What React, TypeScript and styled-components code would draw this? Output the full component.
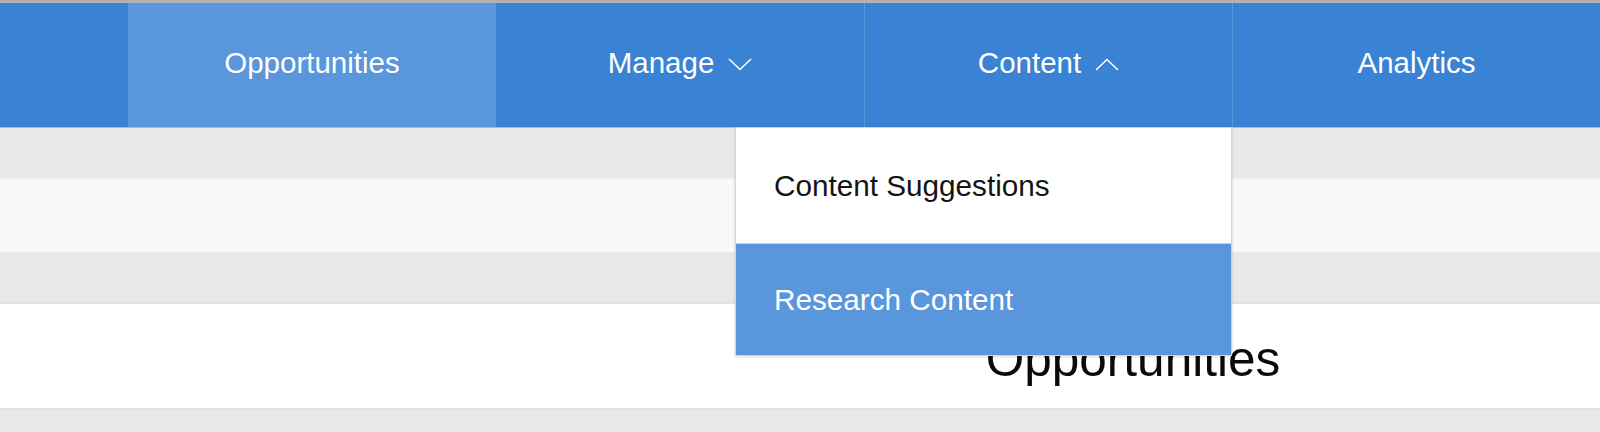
import React from 'react'
import styled, { createGlobalStyle } from 'styled-components'

const GlobalStyle = createGlobalStyle`
  html, body {
    margin: 0;
    padding: 0;
    background: #e8e8e8;
    font-family: "Liberation Sans", Arial, Helvetica, sans-serif;
  }
`;

const Page = styled.div`
  width: 1600px;
  height: 432px;
  overflow: hidden;
  background: #e8e8e8;
`;

const TopLine = styled.div`
  height: 3px;
  background: #b2b2b2;
`;

const NavBar = styled.nav`
  display: grid;
  grid-template-columns: 128px repeat(4, 1fr);
  height: 125px;
  background: #3a82d4;
  border-bottom: 1px solid #9fbfe6;
  box-sizing: border-box;
`;

const NavItem = styled.div<{ $active?: boolean; $divider?: boolean }>`
  position: relative;
  display: flex;
  align-items: center;
  justify-content: center;
  gap: 14px;
  padding-bottom: 4px;
  box-sizing: border-box;
  background: ${p => (p.$active ? '#5a96db' : 'transparent')};
  border-left: ${p => (p.$divider ? '1px solid #5e98dc' : 'none')};
  color: #ffffff;
  font-size: 29.5px;
  line-height: 1;
  cursor: pointer;
`;

const Chevron = styled.svg`
  width: 24px;
  height: 13px;
  margin-top: 2px;
  flex-shrink: 0;
`;

const Dropdown = styled.div`
  position: absolute;
  top: 100%;
  right: 0;
  width: 495px;
  background: #ffffff;
  border: 1px solid #d4d4d4;
  box-shadow: 0 1px 3px rgba(0, 0, 0, 0.15);
  z-index: 10;
`;

const DropItem = styled.div<{ $active?: boolean; $h: number }>`
  display: flex;
  align-items: center;
  height: ${p => p.$h}px;
  padding-left: 38px;
  box-sizing: border-box;
  background: ${p => (p.$active ? '#5a96db' : '#ffffff')};
  color: ${p => (p.$active ? '#ffffff' : '#141414')};
  font-size: 29.7px;
  line-height: 1;
  & + & {
    border-top: 1px solid #cfcfcf;
  }
`;

const Band = styled.div<{ $h: number }>`
  height: ${p => p.$h}px;
  background: #e8e8e8;
`;

const FilterRow = styled.div`
  height: 74px;
  background: #f9f9f9;
  border-top: 1px solid #efefef;
  box-sizing: border-box;
`;

const Panel = styled.section`
  height: 108px;
  background: #ffffff;
  border-top: 2px solid #dfe4ea;
  border-bottom: 2px solid #dfe4ea;
  box-sizing: border-box;
  padding: 30px 0 0 666px;
`;

const Heading = styled.h1`
  margin: 0;
  text-align: center;
  font-size: 49.5px;
  font-weight: 400;
  line-height: 1;
  color: #0a0a0a;
`;

function ChevronIcon({ up }: { up?: boolean }) {
  return (
    <Chevron viewBox="0 0 24 13">
      <polyline
        points={up ? '1,12 12,1.5 23,12' : '1,1 12,11.5 23,1'}
        fill="none"
        stroke="#ffffff"
        strokeWidth="1.6"
      />
    </Chevron>
  );
}

export default function App() {
  return (
    <Page>
      <GlobalStyle />
      <TopLine />
      <NavBar>
        <NavItem />
        <NavItem $active>Opportunities</NavItem>
        <NavItem>
          Manage
          <ChevronIcon />
        </NavItem>
        <NavItem $divider>
          Content
          <ChevronIcon up />
          <Dropdown>
            <DropItem $h={115}>Content Suggestions</DropItem>
            <DropItem $h={112} $active>Research Content</DropItem>
          </Dropdown>
        </NavItem>
        <NavItem $divider>Analytics</NavItem>
      </NavBar>
      <Band $h={50} />
      <FilterRow />
      <Band $h={50} />
      <Panel>
        <Heading>Opportunities</Heading>
      </Panel>
    </Page>
  );
}
